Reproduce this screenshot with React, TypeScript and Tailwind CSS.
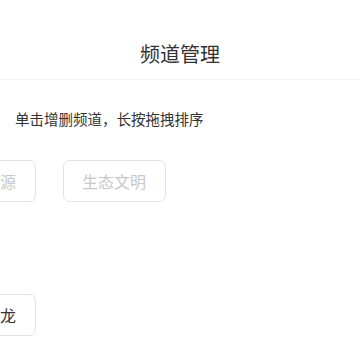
import React from 'react';

const cjk = { fontFamily: '"Noto Sans CJK SC", "Noto Sans", sans-serif' };

export default function App() {
  const rowOne = [
    { name: '能源', muted: true },
    { name: '生态文明', muted: true },
  ];
  const rowTwo = [{ name: '龙', muted: false }];

  const chip = (c: { name: string; muted: boolean }) => (
    <div
      key={c.name}
      className={`flex h-[42px] w-[103px] shrink-0 items-center justify-end rounded-[7px] border border-[#e3e3e3] pr-[19px] text-[16px] ${
        c.muted ? 'text-[#c8c8c8]' : 'text-[#333333]'
      }`}
    >
      {c.name}
    </div>
  );

  return (
    <div className="h-[360px] w-[360px] overflow-hidden bg-white" style={cjk}>
      <div className="flex h-[80px] justify-center border-b border-[#f2f2f2] pt-[40px]">
        <h1 className="text-[20px] leading-[28px] text-[#333333]">频道管理</h1>
      </div>

      <p className="pl-[15px] pt-[28px] text-[14.5px] leading-[21px] text-[#333333]">
        单击增删频道，长按拖拽排序
      </p>

      <div className="ml-[-67px] mt-[31px] flex gap-[27px]">{rowOne.map(chip)}</div>
      <div className="ml-[-67px] mt-[92px] flex gap-[27px]">{rowTwo.map(chip)}</div>
    </div>
  );
}
